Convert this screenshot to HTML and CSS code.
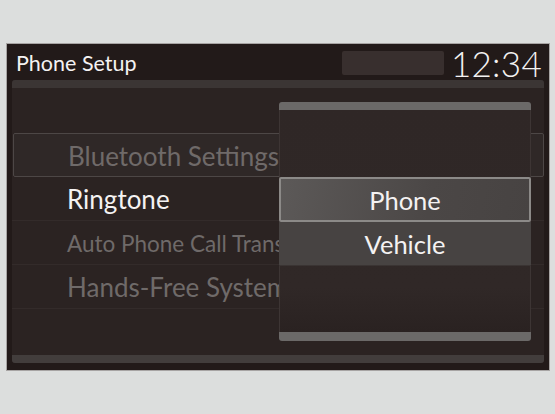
FILE: index.html
```html
<!DOCTYPE html>
<html>
<head>
<meta charset="utf-8">
<link rel="stylesheet" href="styles.css">
</head>
<body>
<div class="screen">
  <div class="header">
    <div class="title">Phone Setup</div>
    <div class="status"></div>
    <div class="clock">12:34</div>
  </div>
  <div class="panel">
    <div class="panel-top"></div>
    <div class="list">
      <div class="row empty"></div>
      <div class="row selected"><span class="label dim">Bluetooth Settings</span></div>
      <div class="row"><span class="label active">Ringtone</span></div>
      <div class="row"><span class="label dim small">Auto Phone Call Transfer</span></div>
      <div class="row"><span class="label dim">Hands-Free System Volume</span></div>
      <div class="row empty last"></div>
    </div>
    <div class="panel-bottom"></div>
  </div>
  <div class="popup">
    <div class="popup-top"></div>
    <div class="popup-body">
      <div class="opt-spacer"></div>
      <div class="opt focused">Phone</div>
      <div class="opt">Vehicle</div>
    </div>
    <div class="popup-bottom"></div>
  </div>
</div>
</body>
</html>
```

FILE: styles.css
```css
html, body {
  margin: 0;
  padding: 0;
}
body {
  background: #dcdedd;
  font-family: "Lato", "Open Sans", sans-serif;
  width: 555px;
  height: 414px;
  overflow: hidden;
}
.screen {
  position: relative;
  box-sizing: border-box;
  margin: 43px 0 0 6px;
  width: 544px;
  height: 328px;
  background: #221a19;
  border: 1px solid #a7a4a3;
  display: flex;
  flex-direction: column;
  overflow: hidden;
}
.header {
  height: 36px;
  display: flex;
  align-items: center;
  padding: 0 7px 0 9px;
}
.title {
  color: #f4f2f2;
  font-size: 21.5px;
  flex: 1;
  margin-top: 2px;
}
.status {
  width: 102px;
  height: 24px;
  background: #382f2e;
  border-radius: 2px;
  margin-right: 7px;
  margin-top: 2px;
}
.clock {
  color: #f4f2f2;
  font-size: 35px;
  font-weight: 300;
  line-height: 40px;
  margin-top: 1px;
  letter-spacing: 0.3px;
}
.panel {
  margin: 0 5px 0 5px;
  height: 283px;
  background: #2b2322;
  border-radius: 3px;
  display: flex;
  flex-direction: column;
  overflow: hidden;
}
.panel-top {
  height: 8px;
  background: #3b3534;
}
.panel-bottom {
  height: 8px;
  background: #423d3c;
  margin-top: auto;
}
.list {
  display: flex;
  flex-direction: column;
}
.row {
  height: 44px;
  box-sizing: border-box;
  display: flex;
  align-items: center;
  padding-left: 55px;
  border-bottom: 1px solid #332b2a;
  white-space: nowrap;
  overflow: hidden;
}
.row.empty {
  height: 45px;
  border-bottom: none;
}
.row.last {
  height: 45px;
}
.row.selected {
  margin-left: 1px;
  border: 1px solid #4d4746;
  border-radius: 2px;
  background: #2f2827;
  padding-left: 54px;
}
.label {
  font-size: 26px;
  padding-top: 1px;
}
.label.small {
  font-size: 22.5px;
}
.dim {
  color: #6f6a69;
}
.active {
  color: #f4f2f2;
}
.popup {
  position: absolute;
  left: 272px;
  top: 58px;
  width: 252px;
  height: 239px;
  display: flex;
  flex-direction: column;
}
.popup-top {
  height: 8px;
  background: #6b6968;
  border-radius: 3px 3px 0 0;
}
.popup-bottom {
  height: 9px;
  background: #6b6968;
  border-radius: 0 0 3px 3px;
}
.popup-body {
  flex: 1;
  box-sizing: border-box;
  background: linear-gradient(#2f2726, #302827 80%, #2a2221);
  border-left: 1px solid #3d3534;
  border-right: 1px solid #3d3534;
  display: flex;
  flex-direction: column;
}
.opt-spacer {
  height: 67px;
}
.opt {
  height: 44px;
  box-sizing: border-box;
  margin: 0 -1px;
  display: flex;
  align-items: center;
  justify-content: center;
  color: #f4f2f2;
  font-size: 25.5px;
  background: #474342;
  border-bottom: 1px solid #3a3433;
}
.opt.focused {
  height: 45px;
  border: 2px solid #8c8a88;
  border-radius: 2px;
  background: linear-gradient(100deg, #5c5958, #4b4746 60%, #474342);
}
```
